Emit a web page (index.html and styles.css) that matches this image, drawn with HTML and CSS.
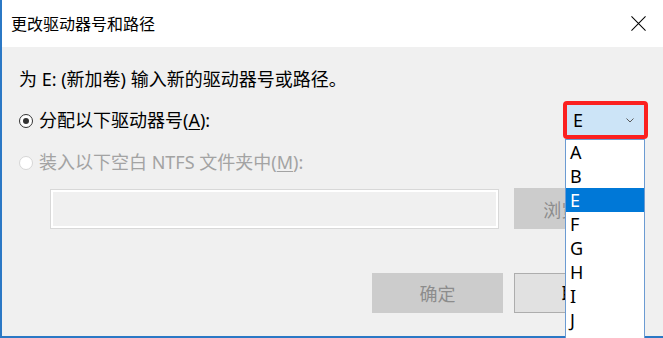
FILE: index.html
```html
<!DOCTYPE html>
<html lang="zh-CN">
<head>
<meta charset="utf-8">
<title>更改驱动器号和路径</title>
<link rel="stylesheet" href="styles.css">
</head>
<body>
<div class="window">
  <div class="titlebar">
    <span class="title">更改驱动器号和路径</span>
    <svg class="close" width="16" height="16" viewBox="0 0 16 16" aria-hidden="true">
      <path d="M0.5 0.5 L15.5 15.5 M15.5 0.5 L0.5 15.5" stroke="#000" stroke-width="1.1" fill="none"/>
    </svg>
  </div>
  <div class="content">
    <p class="prompt">为 E: (新加卷) 输入新的驱动器号或路径。</p>
    <div class="row row-assign">
      <label class="radio-label"><span class="radio checked"></span>分配以下驱动器号(<u>A</u>):</label>
      <div class="combo-wrap">
        <div class="combo">
          <span class="combo-value">E</span>
          <svg class="chevron" width="8" height="5" viewBox="0 0 8 5" aria-hidden="true">
            <path d="M0.5 0.5 L4 4 L7.5 0.5" stroke="#5a5a5a" stroke-width="1" fill="none"/>
          </svg>
        </div>
        <ul class="droplist">
          <li>A</li>
          <li>B</li>
          <li class="selected">E</li>
          <li>F</li>
          <li>G</li>
          <li>H</li>
          <li>I</li>
          <li>J</li>
          <li>K</li>
        </ul>
      </div>
    </div>
    <div class="row row-mount">
      <label class="radio-label disabled"><span class="radio"></span>装入以下空白 NTFS 文件夹中(<u>M</u>):</label>
    </div>
    <div class="row path-row">
      <div class="path-input"></div>
      <button class="btn disabled">浏览(<u>R</u>)...</button>
    </div>
    <div class="row actions">
      <button class="btn disabled">确定</button>
      <button class="btn">取消</button>
    </div>
  </div>
</div>
</body>
</html>
```

FILE: styles.css
```css
html, body {
  margin: 0;
  padding: 0;
  width: 663px;
  height: 338px;
  overflow: hidden;
  background: #ffffff;
}

.window {
  height: 338px;
  box-sizing: border-box;
  border-left: 2px solid #2b78c5;
  border-bottom: 2px solid #2b78c5;
  background: #f0f0f0;
  display: flex;
  flex-direction: column;
  font-family: "Noto Sans", "Noto Sans CJK SC", sans-serif;
  color: #000;
}

.titlebar {
  height: 45px;
  flex: none;
  background: #ffffff;
  display: flex;
  align-items: center;
  justify-content: space-between;
  padding: 0 17px 2px 9px;
}

.title {
  font-family: "Noto Sans CJK SC", sans-serif;
  font-size: 16px;
  line-height: 20px;
  color: #000;
}

.close {
  width: 15px;
  height: 15px;
  margin-top: 1px;
}

.content {
  flex: 1;
  padding: 0 18px 0 17px;
  font-size: 18px;
}

.prompt {
  margin: 20px 0 0;
  line-height: 24px;
  font-family: "Noto Sans", "Noto Sans CJK SC", sans-serif;
}

.row {
  display: flex;
  align-items: center;
}

.row-assign {
  margin-top: 10px;
  height: 38px;
  justify-content: space-between;
}

.radio-label {
  display: flex;
  align-items: center;
  line-height: 24px;
}

.radio-label u {
  text-decoration: underline;
  text-underline-offset: 2px;
  text-decoration-thickness: 1px;
}

.radio-label.disabled {
  color: #a3a3a3;
}

.radio {
  width: 12px;
  height: 12px;
  border-radius: 50%;
  border: 1px solid #333333;
  background: #ffffff;
  margin: 2px 6px 0 0;
  flex: none;
  position: relative;
}

.radio.checked::after {
  content: "";
  position: absolute;
  left: 3px;
  top: 3px;
  width: 6px;
  height: 6px;
  border-radius: 50%;
  background: #333333;
}

.disabled .radio {
  border-color: #d6d6d6;
}

.combo-wrap {
  position: relative;
  width: 77px;
  height: 30px;
  border: 4px solid #fb2020;
  border-radius: 4px;
  margin-right: -3px;
}

.combo {
  height: 100%;
  background: #cce4f7;
  display: flex;
  align-items: center;
  justify-content: space-between;
  padding: 0 10px 0 6px;
  font-size: 18px;
}

.combo-value {
  line-height: 24px;
}

.chevron {
  margin-top: 1px;
}

.droplist {
  position: absolute;
  z-index: 2;
  top: 34px;
  left: -2px;
  width: 80px;
  box-sizing: border-box;
  margin: 0;
  padding: 0;
  list-style: none;
  background: #ffffff;
  border: 1px solid #6b9bd2;
  font-size: 18px;
}

.droplist li {
  height: 24px;
  line-height: 24px;
  padding-left: 4px;
}

.droplist li.selected {
  background: #0078d7;
  color: #ffffff;
}

.row-mount {
  margin-top: 11px;
}

.path-row {
  margin-top: 14px;
  margin-left: 31px;
  gap: 15px;
  align-items: stretch;
  height: 41px;
}

.path-input {
  width: 449px;
  box-sizing: border-box;
  border: 1px solid #d8d8d8;
  box-shadow: inset 0 0 0 2px #ffffff;
  background: #f0f0f0;
  margin-top: 1px;
}

.btn {
  width: 131px;
  height: 41px;
  box-sizing: border-box;
  border: 1px solid #adadad;
  background: #e1e1e1;
  font-family: "Noto Sans", "Noto Sans CJK SC", sans-serif;
  font-size: 18px;
  color: #000;
  padding: 0;
}

.btn.disabled {
  background: #cccccc;
  border-color: #cccccc;
  color: #8c8c8c;
}

.actions {
  margin-top: 44px;
  justify-content: flex-end;
  gap: 11px;
  height: 40px;
}

.actions .btn {
  height: 40px;
}
```
